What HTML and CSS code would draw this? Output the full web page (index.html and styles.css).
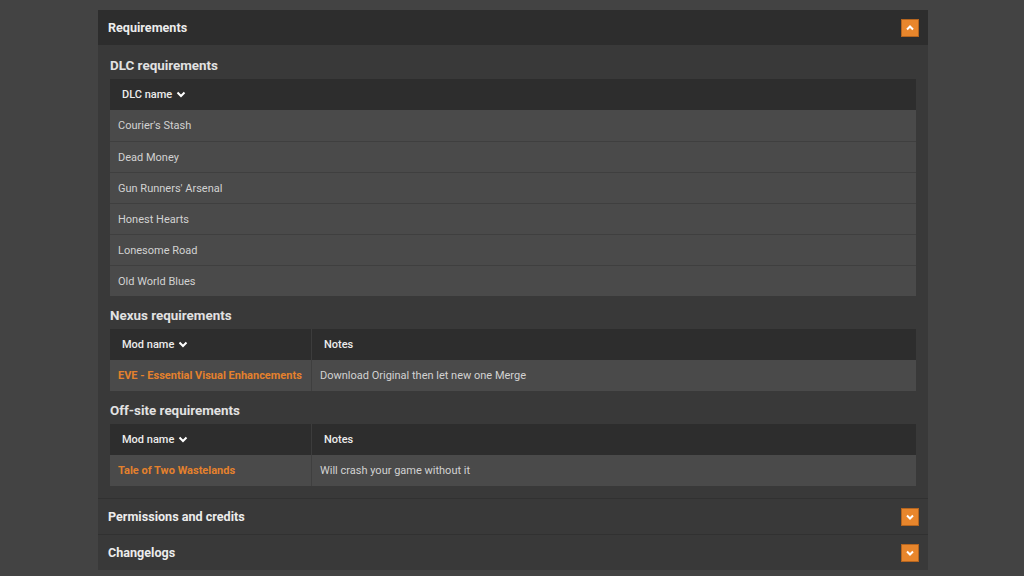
FILE: index.html
```html
<!DOCTYPE html>
<html>
<head>
  <link rel="stylesheet" href="styles.css">
</head>
<body>
  <div class="page">
    <div class="panel">
      <div class="panel-head">
        <span>Requirements</span>
        <button class="toggle"><svg viewBox="0 0 10 10" width="10" height="10"><polyline points="2,6.5 5,3.5 8,6.5" /></svg></button>
      </div>
      <div class="panel-body">
        <h3>DLC requirements</h3>
        <table class="req">
          <thead>
            <tr><th>DLC name <svg class="sort" viewBox="0 0 10 10" width="10" height="10"><polyline points="1.5,3.5 5,7 8.5,3.5" /></svg></th></tr>
          </thead>
          <tbody>
            <tr><td>Courier's Stash</td></tr>
            <tr><td>Dead Money</td></tr>
            <tr><td>Gun Runners' Arsenal</td></tr>
            <tr><td>Honest Hearts</td></tr>
            <tr><td>Lonesome Road</td></tr>
            <tr><td>Old World Blues</td></tr>
          </tbody>
        </table>

        <h3>Nexus requirements</h3>
        <table class="req">
          <thead>
            <tr>
              <th class="name-col">Mod name <svg class="sort" viewBox="0 0 10 10" width="10" height="10"><polyline points="1.5,3.5 5,7 8.5,3.5" /></svg></th>
              <th>Notes</th>
            </tr>
          </thead>
          <tbody>
            <tr>
              <td><a href="#">EVE - Essential Visual Enhancements</a></td>
              <td>Download Original then let new one Merge</td>
            </tr>
          </tbody>
        </table>

        <h3>Off-site requirements</h3>
        <table class="req">
          <thead>
            <tr>
              <th class="name-col">Mod name <svg class="sort" viewBox="0 0 10 10" width="10" height="10"><polyline points="1.5,3.5 5,7 8.5,3.5" /></svg></th>
              <th>Notes</th>
            </tr>
          </thead>
          <tbody>
            <tr>
              <td><a href="#">Tale of Two Wastelands</a></td>
              <td>Will crash your game without it</td>
            </tr>
          </tbody>
        </table>
      </div>
    </div>

    <div class="panel closed">
      <div class="panel-head">
        <span>Permissions and credits</span>
        <button class="toggle"><svg viewBox="0 0 10 10" width="10" height="10"><polyline points="2,3.5 5,6.5 8,3.5" /></svg></button>
      </div>
    </div>

    <div class="panel closed">
      <div class="panel-head">
        <span>Changelogs</span>
        <button class="toggle"><svg viewBox="0 0 10 10" width="10" height="10"><polyline points="2,3.5 5,6.5 8,3.5" /></svg></button>
      </div>
    </div>
  </div>
</body>
</html>
```

FILE: styles.css
```css
body {
  margin: 0;
  background-color: #434343;
  font-family: Roboto, "Liberation Sans", sans-serif;
  color: #e6e6e6;
}

.page {
  width: 830px;
  margin: 10px 0 0 98px;
}

.panel {
  background-color: #393939;
}

.panel-head {
  height: 35px;
  padding: 0 9px 0 10px;
  display: flex;
  align-items: center;
  justify-content: space-between;
  background-color: #2d2d2d;
  font-size: 12.6px;
  font-weight: bold;
  color: #ececec;
}

.closed .panel-head {
  background-color: #393939;
  border-top: 1px solid #313131;
}

.toggle {
  width: 18px;
  height: 18px;
  padding: 0;
  border: 1px solid #b5651f;
  background-color: #e8862c;
  display: flex;
  align-items: center;
  justify-content: center;
  cursor: pointer;
}

.toggle polyline,
.sort polyline {
  fill: none;
  stroke: #fff;
  stroke-width: 2;
}

.panel-body {
  padding: 1px 12px 12px;
}

h3 {
  margin: 0;
  padding: 12px 0 5px;
  line-height: 16px;
  font-size: 13.4px;
  font-weight: bold;
  color: #e2e2e2;
}

.req {
  width: 100%;
  border-collapse: collapse;
  font-size: 11px;
}

.req th {
  height: 31px;
  padding: 0 12px;
  text-align: left;
  font-weight: 500;
  background-color: #2d2d2d;
  color: #ececec;
}

.req th + th {
  border-left: 1px solid #3c3c3c;
}

.sort {
  vertical-align: -1px;
  margin-left: 1px;
}

.req td {
  height: 30px;
  padding: 0 8px;
  background-color: #4a4a4a;
  color: #d2d2d2;
  border-top: 1px solid #3f3f3f;
}

.req td + td {
  border-left: 1px solid #3f3f3f;
}

.req thead + tbody tr:first-child td {
  border-top: none;
  height: 31px;
}

.name-col {
  width: 177px;
}

.req a {
  color: #e4812d;
  font-weight: bold;
  text-decoration: none;
}
```
